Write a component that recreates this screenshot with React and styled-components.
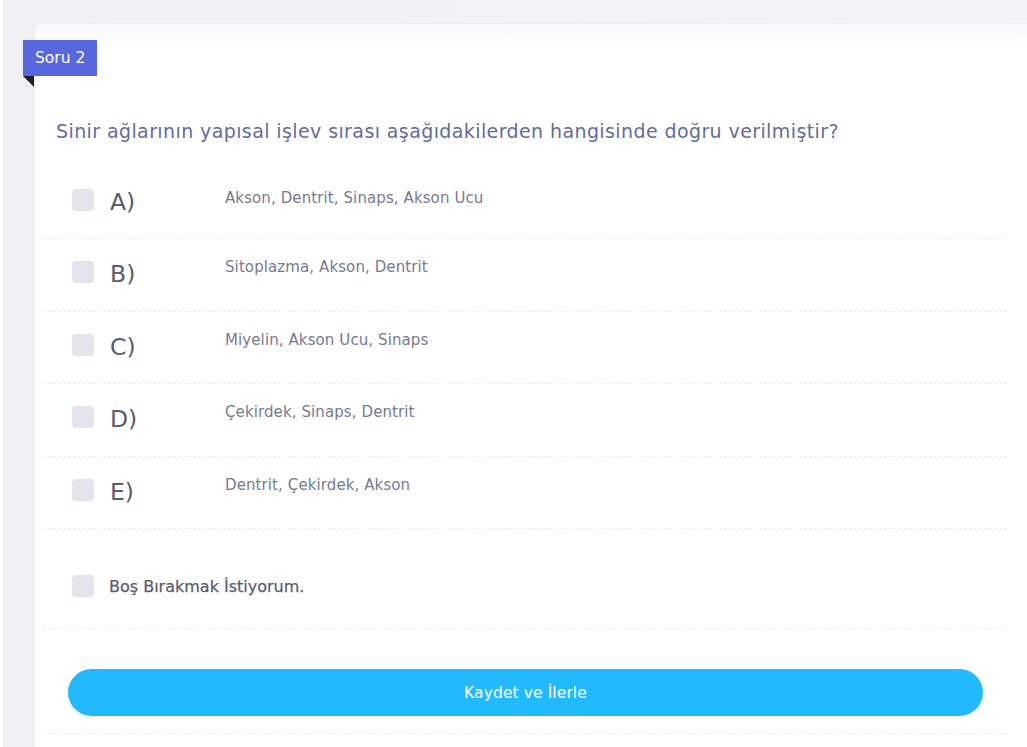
import React from "react";
import styled, { createGlobalStyle } from "styled-components";

const Global = createGlobalStyle`
  html, body { margin: 0; padding: 0; background: #ffffff; }
  body { font-family: "DejaVu Sans", "Open Sans", sans-serif; overflow: hidden; }
  * { box-sizing: border-box; }
`;

const Page = styled.div`
  margin-left: 3px;
  min-height: 747px;
  background: linear-gradient(90deg, #f0f0f5 0%, #f4f4f8 100%);
  padding: 23px 0 0 31px;
  overflow: hidden;
`;

const Card = styled.div`
  position: relative;
  width: 1000px;
  min-height: 724px;
  background: linear-gradient(180deg, #f8f8fb 0px, #ffffff 22px);
  border: 1px solid #ebedf2;
  border-right: none;
  border-bottom: none;
  border-radius: 4px 0 0 0;
`;

const Ribbon = styled.div`
  position: absolute;
  left: -12px;
  top: 16px;
  width: 74px;
  height: 36px;
  background: #5867dd;
  color: #ffffff;
  font-size: 15.5px;
  line-height: 36px;
  padding-left: 12px;
`;

const Fold = styled.div`
  position: absolute;
  left: -12px;
  top: 52px;
  width: 0;
  height: 0;
  border-top: 11px solid #1f1f25;
  border-left: 11px solid transparent;
`;

const Body = styled.div`
  padding: 94px 27px 0 8px;
`;

const Question = styled.h3`
  margin: 0 0 0 13px;
  font-size: 19px;
  font-weight: 400;
  line-height: 26px;
  letter-spacing: 0.4px;
  color: #656b9b;
`;

const Options = styled.div`
  margin-top: 22px;
`;

const OptionRow = styled.label`
  display: grid;
  grid-template-columns: 22px 99px 1fr;
  column-gap: 16px;
  align-items: start;
  height: ${(p) => (p.$first ? "73px" : "72.5px")};
  padding: ${(p) => (p.$first ? "23px" : "22px")} 0 0 29px;
  border-bottom: 1px dashed #ebedf2;
  cursor: pointer;
`;

const Box = styled.span`
  display: block;
  width: 22px;
  height: 22px;
  border-radius: 4px;
  background: #e2e5ec;
`;

const Letter = styled.span`
  font-size: 23.5px;
  line-height: 28px;
  color: #595d6e;
  margin-top: -1px;
`;

const Answer = styled.span`
  font-size: 15px;
  line-height: 20px;
  letter-spacing: 0.1px;
  color: #777a90;
  margin-top: ${(p) => p.$offset || 0}px;
`;

const EmptyRow = styled.label`
  display: flex;
  align-items: center;
  gap: 15px;
  height: 100px;
  padding: 15px 0 0 29px;
  border-bottom: 1px dashed #ebedf2;
  cursor: pointer;
`;

const EmptyText = styled.span`
  font-size: 16px;
  font-weight: 400;
  color: #595d6e;
  -webkit-text-stroke: 0.25px #595d6e;
`;

const Actions = styled.div`
  height: 105px;
  padding: 40px 24px 0 25px;
  border-bottom: 1px dashed #ebedf2;
`;

const SaveButton = styled.button`
  display: block;
  width: 100%;
  height: 47px;
  border: none;
  border-radius: 24px;
  background: #22b9ff;
  color: #ffffff;
  font-family: inherit;
  font-size: 15.5px;
  letter-spacing: 0.1px;
  cursor: pointer;
`;

const options = [
  { key: "A", text: "Akson, Dentrit, Sinaps, Akson Ucu" },
  { key: "B", text: "Sitoplazma, Akson, Dentrit" },
  { key: "C", text: "Miyelin, Akson Ucu, Sinaps" },
  { key: "D", text: "Çekirdek, Sinaps, Dentrit" },
  { key: "E", text: "Dentrit, Çekirdek, Akson" },
];

export default function App() {
  return (
    <>
      <Global />
      <Page>
        <Card>
          <Ribbon>Soru 2</Ribbon>
          <Fold />
          <Body>
            <Question>
              Sinir ağlarının yapısal işlev sırası aşağıdakilerden hangisinde doğru verilmiştir?
            </Question>
            <Options>
              {options.map((o, i) => (
                <OptionRow key={o.key} $first={i === 0}>
                  <Box />
                  <Letter>{o.key})</Letter>
                  <Answer $offset={i === 0 ? -1 : -4}>{o.text}</Answer>
                </OptionRow>
              ))}
            </Options>
            <EmptyRow>
              <Box />
              <EmptyText>Boş Bırakmak İstiyorum.</EmptyText>
            </EmptyRow>
            <Actions>
              <SaveButton>Kaydet ve İlerle</SaveButton>
            </Actions>
          </Body>
        </Card>
      </Page>
    </>
  );
}
